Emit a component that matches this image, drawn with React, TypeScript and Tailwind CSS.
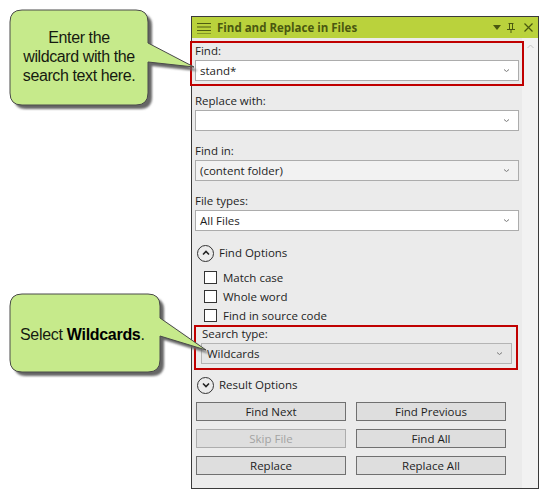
const UI_FONT = "font-['Open_Sans','Noto_Sans',sans-serif]";

function Chevron({ up = false }: { up?: boolean }) {
  return (
    <svg width="7" height="5" viewBox="0 0 7 5" className="shrink-0">
      <path d={up ? "M0.5 4 L3.5 1 L6.5 4" : "M1 1.5 L3.5 3.5 L6 1.5"} fill="none" stroke="#7a7a7a" strokeWidth="1" />
    </svg>
  );
}

function Combo({ value, grey = false }: { value: string; grey?: boolean }) {
  return (
    <div
      className={`flex h-[21px] items-center justify-between border border-[#acacac] pl-[4px] pr-[8px] text-[#1e1e1e] ${
        grey ? "bg-[#f2f2f2]" : "bg-white"
      }`}
    >
      <span>{value}</span>
      <Chevron />
    </div>
  );
}

function Field({ label, value, grey }: { label: string; value: string; grey?: boolean }) {
  return (
    <div>
      <div className="h-[19px] leading-[19px] text-[#1e1e1e]">{label}</div>
      <Combo value={value} grey={grey} />
    </div>
  );
}

function Expander({ label, open }: { label: string; open: boolean }) {
  return (
    <div className="flex h-[20px] items-center gap-[5px] pl-[2px]">
      <span className="flex h-[17px] w-[17px] items-center justify-center rounded-full border border-[#333]">
        <svg width="8" height="6" viewBox="0 0 8 6">
          <path
            d={open ? "M1 4.5 L4 1.5 L7 4.5" : "M1 1.5 L4 4.5 L7 1.5"}
            fill="none"
            stroke="#222"
            strokeWidth="1.6"
          />
        </svg>
      </span>
      <span className="text-[#1e1e1e]">{label}</span>
    </div>
  );
}

function Check({ label }: { label: string }) {
  return (
    <div className="flex h-[19px] items-center gap-[6px] pl-[9px]">
      <span className="h-[13px] w-[13px] border border-[#333] bg-white" />
      <span className="text-[#1e1e1e]">{label}</span>
    </div>
  );
}

function Btn({ label, disabled = false }: { label: string; disabled?: boolean }) {
  return (
    <button
      type="button"
      className={`h-[19px] w-[150px] border bg-[#dedede] text-center leading-[17px] ${
        disabled ? "border-[#adadad] text-[#a3a3a3]" : "border-[#707070] text-[#1e1e1e]"
      }`}
    >
      {label}
    </button>
  );
}

function Callouts() {
  const c1 =
    "M22 10 H136 Q148 10 148 22 V43 L194 67 L148 62 V93 Q148 105 136 105 H22 Q10 105 10 93 V22 Q10 10 22 10 Z";
  const c2 =
    "M22 294 H148 Q160 294 160 306 V318 L206 350 L160 336 V360 Q160 372 148 372 H22 Q10 372 10 360 V306 Q10 294 22 294 Z";
  return (
    <>
      <svg className="pointer-events-none absolute left-0 top-0" width="539" height="490">
        <defs>
          <filter id="soft" x="-10%" y="-10%" width="120%" height="120%">
            <feGaussianBlur stdDeviation="0.8" />
          </filter>
        </defs>
        <g transform="translate(4 4)" fill="#666" filter="url(#soft)">
          <path d={c1} />
          <path d={c2} />
        </g>
        <g fill="#c6ea8b" stroke="#4a4a4a" strokeWidth="1">
          <path d={c1} />
          <path d={c2} />
        </g>
      </svg>
      <div className="absolute left-[12px] top-[28px] w-[134px] text-center font-['Liberation_Sans',Arial,sans-serif] text-[16px] leading-[19px] tracking-[-0.4px] text-[#161a10]">
        Enter the
        <br />
        wildcard with the
        <br />
        search text here.
      </div>
      <div className="absolute left-[20px] top-[325px] font-['Liberation_Sans',Arial,sans-serif] text-[16px] leading-[19px] tracking-[-0.3px] text-[#161a10]">
        Select <b className="text-black">Wildcards</b>.
      </div>
    </>
  );
}

export default function App() {
  return (
    <div className={`relative h-[490px] w-[539px] overflow-hidden bg-white pl-[191px] pt-[16px] text-[11.5px] ${UI_FONT}`}>
      {/* panel */}
      <div className="flex h-[473px] w-[348px] flex-col border border-[#3a3a3a]">
        <div className="flex h-[21px] shrink-0 items-center bg-[#bad23c] pl-[5px] pr-[5px]">
          <svg width="14" height="12" viewBox="0 0 14 12" className="shrink-0">
            <g stroke="#4e5c12" strokeWidth="1">
              <line x1="0" y1="1.5" x2="14" y2="1.5" />
              <line x1="0" y1="5" x2="14" y2="5" />
              <line x1="0" y1="8.5" x2="14" y2="8.5" />
              <line x1="0" y1="12" x2="14" y2="12" />
            </g>
          </svg>
          <span className="ml-[6px] text-[11.5px] font-bold text-[#4a5810]">Find and Replace in Files</span>
          <div className="ml-auto flex items-center gap-[6px]">
            <svg width="8" height="5" viewBox="0 0 8 5">
              <path d="M0 0 H8 L4 5 Z" fill="#4a5810" />
            </svg>
            <svg width="8" height="10" viewBox="0 0 8 10">
              <g stroke="#4a5810" strokeWidth="1" fill="none">
                <path d="M1.5 0.5 H6.5 M2.5 0.5 V6.5 M5.5 0.5 V6.5 M0 6.5 H8 M4 6.5 V10" />
              </g>
            </svg>
            <svg width="9" height="9" viewBox="0 0 9 9" className="ml-[3px]">
              <path d="M0.5 0.5 L8.5 8.5 M8.5 0.5 L0.5 8.5" stroke="#4a5810" strokeWidth="1.2" />
            </svg>
          </div>
        </div>

        <div className="flex flex-1">
          <div className="flex-1 bg-[#ebebeb] px-[3px] pt-[3px]">
            <div className="flex flex-col gap-[10px]">
              <Field label="Find:" value="stand*" />
              <Field label="Replace with:" value="" />
              <Field label="Find in:" value="(content folder)" grey />
              <Field label="File types:" value="All Files" />
            </div>

            <div className="mt-[12px]">
              <Expander label="Find Options" open />
            </div>
            <div className="mt-[5px]">
              <Check label="Match case" />
              <Check label="Whole word" />
              <Check label="Find in source code" />
            </div>
            <div className="ml-[6px] mr-[7px]">
              <div className="h-[18px] pl-[1px] leading-[18px] text-[#1e1e1e]">Search type:</div>
              <div className="flex h-[21px] items-center justify-between border border-[#b4b4b4] bg-[#e6e6e6] pl-[5px] pr-[8px] text-[#1e1e1e]">
                <span>Wildcards</span>
                <Chevron />
              </div>
            </div>

            <div className="mt-[11px]">
              <Expander label="Result Options" open={false} />
            </div>
            <div className="ml-[1px] mt-[7px] grid w-[310px] grid-cols-2 gap-x-[10px] gap-y-[8px]">
              <Btn label="Find Next" />
              <Btn label="Find Previous" />
              <Btn label="Skip File" disabled />
              <Btn label="Find All" />
              <Btn label="Replace" />
              <Btn label="Replace All" />
            </div>
          </div>
          <div className="flex w-[16px] justify-center bg-[#f2f2f2] pt-[6px]">
            <svg width="7" height="5" viewBox="0 0 7 5">
              <path d="M0.5 4 L3.5 1 L6.5 4" fill="none" stroke="#c4c4c4" strokeWidth="1" />
            </svg>
          </div>
        </div>
      </div>

      {/* highlight boxes */}
      <div className="absolute left-[190px] top-[41px] h-[45px] w-[334px] border-2 border-[#c00000]" />
      <div className="absolute left-[194px] top-[325px] h-[45px] w-[324px] border-2 border-[#c00000]" />

      <Callouts />
    </div>
  );
}
